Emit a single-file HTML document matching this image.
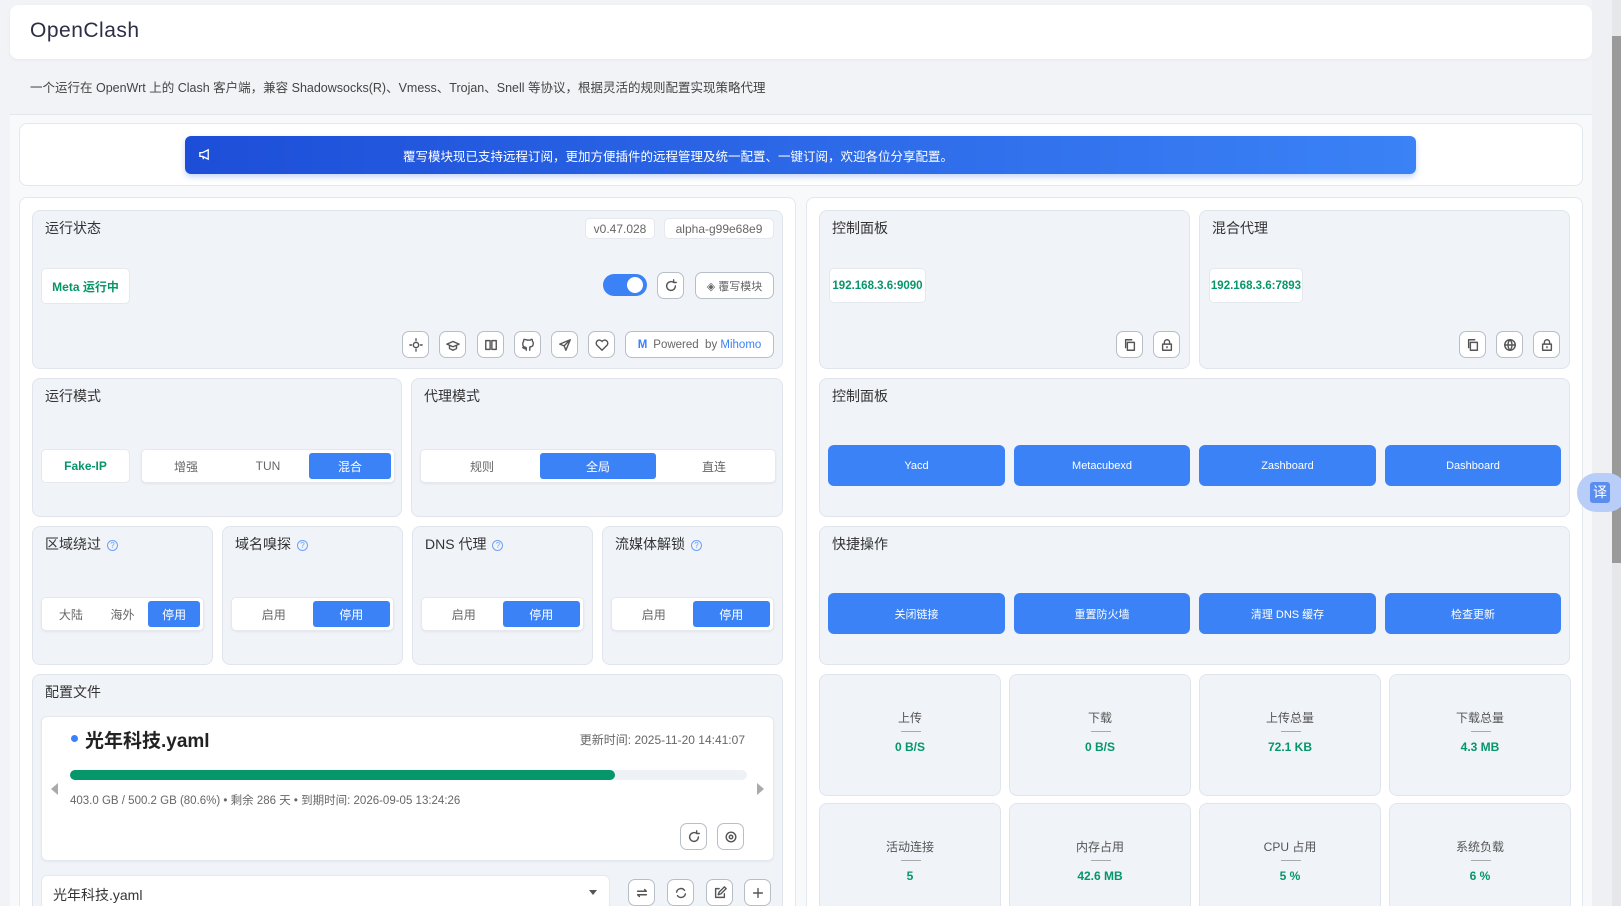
<!DOCTYPE html>
<html style="width:1621px;height:906px;overflow:hidden"><head><meta charset="utf-8">
<style>
*{box-sizing:border-box;margin:0;padding:0}
body{width:1621px;height:906px;overflow:hidden;background:#f2f3f6;font-family:"Liberation Sans","Noto Sans CJK SC",sans-serif;color:#333;position:relative}
.a{position:absolute}
.card{position:absolute;background:#f0f3f8;border:1px solid #e0e5ed;border-radius:8px}
.panel{position:absolute;background:#fff;border:1px solid #e3e7ee;border-radius:8px}
.t{position:absolute;left:12px;top:7px;font-size:14px;color:#333}
.wb{position:absolute;background:#fff;border:1px solid #e5e8ee;border-radius:5px;font-size:12px;display:flex;align-items:center;justify-content:center}
.g{color:#059669;font-weight:bold}
.ib{position:absolute;width:27px;height:27px;border:1px solid #b8bec8;border-radius:7px;background:#fff;display:flex;align-items:center;justify-content:center}
.ib svg{width:14px;height:14px;fill:none;stroke:#555;stroke-width:1.6;stroke-linecap:round;stroke-linejoin:round}
.seg{position:absolute;background:#fff;border:1px solid #e5e8ee;border-radius:5px;box-shadow:0 1px 2px rgba(0,0,0,.06);display:flex;padding:3px;font-size:12px;color:#666}
.seg div{flex:1;display:flex;align-items:center;justify-content:center;border-radius:3px}
.seg .on{background:#3b82f6;color:#fff}
.bb{position:absolute;background:#3b82f6;color:#fff;border-radius:6px;font-size:11px;display:flex;align-items:center;justify-content:center;height:41px}
.st{position:absolute;width:182px;height:122px;text-align:center;font-size:12px;color:#555}
.st .l{position:absolute;left:0;right:0;top:34px}
.st .d{position:absolute;left:81px;width:20px;top:56px;border-top:1px solid #aaa}
.st .v{position:absolute;left:0;right:0;top:65px;color:#059669;font-weight:bold;font-size:12px}
.q{display:inline-block;width:11px;height:11px;border:1px solid #6fa1f7;border-radius:50%;font-size:8px;color:#6fa1f7;text-align:center;line-height:10px;margin-left:6px;vertical-align:1px}
</style></head><body>

<div class="a" style="left:10px;top:5px;width:1582px;height:54px;background:#fff;border-radius:8px;box-shadow:0 1px 3px rgba(0,0,0,.05)"></div>
<div class="a" style="left:30px;top:19px;font-size:21px;color:#2b2f45;letter-spacing:.5px">OpenClash</div>
<div class="a" style="left:30px;top:77px;font-size:12.5px;color:#444">一个运行在 OpenWrt 上的 Clash 客户端，兼容 Shadowsocks(R)、Vmess、Trojan、Snell 等协议，根据灵活的规则配置实现策略代理</div>

<div class="a" style="left:10px;top:114px;width:1582px;height:792px;background:#f8f9fb;border-top:1px solid #e3e6eb"></div>
<div class="panel" style="left:19px;top:123px;width:1564px;height:63px"></div>
<div class="a" style="left:185px;top:136px;width:1231px;height:38px;border-radius:6px;background:linear-gradient(90deg,#1d4ed8,#3b82f6);box-shadow:0 3px 6px rgba(37,99,235,.25);color:#fff;font-size:12.5px;display:flex;align-items:center;padding-left:218px;white-space:nowrap">覆写模块现已支持远程订阅，更加方便插件的远程管理及统一配置、一键订阅，欢迎各位分享配置。</div>
<svg class="a" style="left:198px;top:148px" width="13" height="13" viewBox="0 0 14 14" fill="none" stroke="#fff" stroke-width="1.4"><path d="M2 5h3l6-3v10L5 9H2z M5 9l1 3"/></svg>

<div class="panel" style="left:19px;top:197px;width:777px;height:720px"></div>
<div class="panel" style="left:806px;top:197px;width:777px;height:720px"></div>

<!-- run status -->
<div class="card" style="left:32px;top:210px;width:751px;height:159px">
 <div class="t">运行状态</div>
 <div class="wb" style="left:552px;top:7px;width:70px;height:21px;color:#666">v0.47.028</div>
 <div class="wb" style="left:631px;top:7px;width:110px;height:21px;color:#666">alpha-g99e68e9</div>
 <div class="wb g" style="left:8px;top:57px;width:89px;height:36px">Meta 运行中</div>
 <div class="a" style="left:570px;top:63px;width:44px;height:22px;border-radius:11px;background:#3b82f6"><div class="a" style="left:24px;top:3px;width:16px;height:16px;border-radius:50%;background:#fff"></div></div>
 <div class="ib" style="left:624px;top:61px"><svg viewBox="0 0 16 16"><path d="M13 8a5 5 0 1 1-2-4M11 1v3h3"/></svg></div>
 <div class="a" style="left:662px;top:61px;width:79px;height:27px;border:1px solid #b8bec8;border-radius:7px;background:#fff;font-size:11px;color:#666;display:flex;align-items:center;justify-content:center">◈ 覆写模块</div>
 <div class="ib" style="left:369px;top:120px"><svg viewBox="0 0 16 16"><circle cx="8" cy="8" r="3"/><path d="M8 1v2M8 13v2M1 8h2M13 8h2"/></svg></div>
 <div class="ib" style="left:406px;top:120px"><svg viewBox="0 0 16 16"><path d="M1 7l7-3 7 3-7 3zM4 9v3l4 2 4-2V9"/></svg></div>
 <div class="ib" style="left:444px;top:120px"><svg viewBox="0 0 16 16"><path d="M2 3h5v10H2zM9 3h5v10H9z"/></svg></div>
 <div class="ib" style="left:481px;top:120px"><svg viewBox="0 0 16 16"><path d="M6 14v-2c-3 1-3-1-4-1M10 14v-2.5c0-1 .5-1.5 1-1.5 2 0 3-1 3-4 0-1-.5-2-1-2.5 0-1 0-2-.5-2-1 0-2 1-2 1a7 7 0 0 0-3 0S4.5 1.5 3.5 1.5C3 2 3 3 3 4c-.5.5-1 1.5-1 2.5 0 3 1 4 3 4 .5 0 1 .5 1 1.5"/></svg></div>
 <div class="ib" style="left:518px;top:120px"><svg viewBox="0 0 16 16"><path d="M14 2L2 7l5 2 2 5zM7 9l7-7"/></svg></div>
 <div class="ib" style="left:555px;top:120px"><svg viewBox="0 0 16 16"><path d="M8 14L2 8a3.5 3.5 0 0 1 6-4 3.5 3.5 0 0 1 6 4z"/></svg></div>
 <div class="a" style="left:592px;top:120px;width:149px;height:27px;border:1px solid #b8bec8;border-radius:7px;background:#fff;font-size:11.5px;color:#666;display:flex;align-items:center;justify-content:center"><b style="color:#3b82f6;margin-right:6px">M</b>Powered&nbsp; by&nbsp; <span style="color:#3b82f6">Mihomo</span></div>
</div>

<!-- run mode -->
<div class="card" style="left:32px;top:378px;width:370px;height:139px">
 <div class="t">运行模式</div>
 <div class="wb g" style="left:8px;top:70px;width:89px;height:34px">Fake-IP</div>
 <div class="seg" style="left:108px;top:70px;width:254px;height:34px"><div>增强</div><div>TUN</div><div class="on">混合</div></div>
</div>
<div class="card" style="left:411px;top:378px;width:372px;height:139px">
 <div class="t">代理模式</div>
 <div class="seg" style="left:8px;top:70px;width:356px;height:34px"><div>规则</div><div class="on">全局</div><div>直连</div></div>
</div>

<div class="card" style="left:32px;top:526px;width:181px;height:139px"><div class="t">区域绕过<span class="q">?</span></div>
 <div class="seg" style="left:8px;top:70px;width:163px;height:34px"><div>大陆</div><div>海外</div><div class="on">停用</div></div></div>
<div class="card" style="left:222px;top:526px;width:181px;height:139px"><div class="t">域名嗅探<span class="q">?</span></div>
 <div class="seg" style="left:8px;top:70px;width:163px;height:34px"><div>启用</div><div class="on">停用</div></div></div>
<div class="card" style="left:412px;top:526px;width:181px;height:139px"><div class="t">DNS 代理<span class="q">?</span></div>
 <div class="seg" style="left:8px;top:70px;width:163px;height:34px"><div>启用</div><div class="on">停用</div></div></div>
<div class="card" style="left:602px;top:526px;width:181px;height:139px"><div class="t">流媒体解锁<span class="q">?</span></div>
 <div class="seg" style="left:8px;top:70px;width:163px;height:34px"><div>启用</div><div class="on">停用</div></div></div>

<!-- config -->
<div class="card" style="left:32px;top:674px;width:751px;height:250px">
 <div class="t">配置文件</div>
 <div class="a" style="left:8px;top:41px;width:733px;height:145px;background:#fff;border:1px solid #e5e8ee;border-radius:6px;box-shadow:0 1px 2px rgba(0,0,0,.05)">
  <div class="a" style="left:29px;top:18px;width:7px;height:7px;border-radius:50%;background:#3b82f6"></div>
  <div class="a" style="left:43px;top:9px;font-size:19px;font-weight:bold;color:#222">光年科技.yaml</div>
  <div class="a" style="right:28px;top:14px;font-size:12px;color:#666">更新时间: 2025-11-20 14:41:07</div>
  <div class="a" style="left:28px;top:53px;width:677px;height:10px;border-radius:5px;background:#eef1f6"><div style="width:545px;height:10px;border-radius:5px;background:#059669"></div></div>
  <div class="a" style="left:9px;top:66px;width:0;height:0;border-top:6px solid transparent;border-bottom:6px solid transparent;border-right:7px solid #aaa"></div>
  <div class="a" style="right:9px;top:66px;width:0;height:0;border-top:6px solid transparent;border-bottom:6px solid transparent;border-left:7px solid #aaa"></div>
  <div class="a" style="left:28px;top:75px;font-size:11.5px;color:#666">403.0 GB / 500.2 GB (80.6%) • 剩余 286 天 • 到期时间: 2026-09-05 13:24:26</div>
  <div class="ib" style="left:638px;top:106px"><svg viewBox="0 0 16 16"><path d="M13 8a5 5 0 1 1-2-4M11 1v3h3"/></svg></div>
  <div class="ib" style="left:675px;top:106px"><svg viewBox="0 0 16 16"><circle cx="8" cy="8" r="2"/><circle cx="8" cy="8" r="5.5"/></svg></div>
 </div>
 <div class="a" style="left:8px;top:200px;width:569px;height:40px;background:#fff;border:1px solid #e5e8ee;border-radius:6px;font-size:14px;color:#333;padding:9px 11px">光年科技.yaml<span style="position:absolute;right:12px;top:14px;border-left:4px solid transparent;border-right:4px solid transparent;border-top:5px solid #555"></span></div>
 <div class="ib" style="left:595px;top:204px"><svg viewBox="0 0 16 16"><path d="M3 6h10l-2-2M13 10H3l2 2"/></svg></div>
 <div class="ib" style="left:634px;top:204px"><svg viewBox="0 0 16 16"><path d="M3 7a5 5 0 0 1 9-2M13 9a5 5 0 0 1-9 2"/></svg></div>
 <div class="ib" style="left:673px;top:204px"><svg viewBox="0 0 16 16"><path d="M7 3H3v10h10V9M6 10l1-3 6-6 2 2-6 6z"/></svg></div>
 <div class="ib" style="left:711px;top:204px"><svg viewBox="0 0 16 16"><path d="M8 3v10M3 8h10"/></svg></div>
</div>

<!-- right -->
<div class="card" style="left:819px;top:210px;width:371px;height:159px">
 <div class="t">控制面板</div>
 <div class="wb g" style="left:9px;top:57px;width:97px;height:35px;font-size:11.5px">192.168.3.6:9090</div>
 <div class="ib" style="left:296px;top:120px"><svg viewBox="0 0 16 16"><path d="M5 5h8v9H5zM3 11V2h7"/></svg></div>
 <div class="ib" style="left:333px;top:120px"><svg viewBox="0 0 16 16"><path d="M3 7h10v7H3zM5 7V5a3 3 0 0 1 6 0v2M8 10v1"/></svg></div>
</div>
<div class="card" style="left:1199px;top:210px;width:371px;height:159px">
 <div class="t">混合代理</div>
 <div class="wb g" style="left:9px;top:57px;width:94px;height:35px;font-size:11.5px">192.168.3.6:7893</div>
 <div class="ib" style="left:259px;top:120px"><svg viewBox="0 0 16 16"><path d="M5 5h8v9H5zM3 11V2h7"/></svg></div>
 <div class="ib" style="left:296px;top:120px"><svg viewBox="0 0 16 16"><circle cx="8" cy="8" r="6"/><path d="M2 8h12M8 2c-3 3-3 9 0 12M8 2c3 3 3 9 0 12"/></svg></div>
 <div class="ib" style="left:333px;top:120px"><svg viewBox="0 0 16 16"><path d="M3 7h10v7H3zM5 7V5a3 3 0 0 1 6 0v2M8 10v1"/></svg></div>
</div>
<div class="card" style="left:819px;top:378px;width:751px;height:139px"><div class="t">控制面板</div></div>
<div class="bb" style="left:828px;top:445px;width:177px">Yacd</div>
<div class="bb" style="left:1014px;top:445px;width:176px">Metacubexd</div>
<div class="bb" style="left:1199px;top:445px;width:177px">Zashboard</div>
<div class="bb" style="left:1385px;top:445px;width:176px">Dashboard</div>
<div class="card" style="left:819px;top:526px;width:751px;height:139px"><div class="t">快捷操作</div></div>
<div class="bb" style="left:828px;top:593px;width:177px">关闭链接</div>
<div class="bb" style="left:1014px;top:593px;width:176px">重置防火墙</div>
<div class="bb" style="left:1199px;top:593px;width:177px">清理 DNS 缓存</div>
<div class="bb" style="left:1385px;top:593px;width:176px">检查更新</div>

<div class="card st" style="left:819px;top:674px"><div class="l">上传</div><div class="d"></div><div class="v">0 B/S</div></div>
<div class="card st" style="left:1009px;top:674px"><div class="l">下载</div><div class="d"></div><div class="v">0 B/S</div></div>
<div class="card st" style="left:1199px;top:674px"><div class="l">上传总量</div><div class="d"></div><div class="v">72.1 KB</div></div>
<div class="card st" style="left:1389px;top:674px"><div class="l">下载总量</div><div class="d"></div><div class="v">4.3 MB</div></div>
<div class="card st" style="left:819px;top:803px"><div class="l">活动连接</div><div class="d"></div><div class="v">5</div></div>
<div class="card st" style="left:1009px;top:803px"><div class="l">内存占用</div><div class="d"></div><div class="v">42.6 MB</div></div>
<div class="card st" style="left:1199px;top:803px"><div class="l">CPU 占用</div><div class="d"></div><div class="v">5 %</div></div>
<div class="card st" style="left:1389px;top:803px"><div class="l">系统负载</div><div class="d"></div><div class="v">6 %</div></div>

<!-- scrollbar -->
<div class="a" style="left:1592px;top:0;width:20px;height:906px;background:#eef0f4"></div>
<div class="a" style="left:1612px;top:0;width:9px;height:906px;background:#e6e7ea"></div>
<div class="a" style="left:1612px;top:36px;width:9px;height:527px;background:#9a9a9a"></div>
<div class="a" style="left:1577px;top:473px;width:50px;height:39px;border-radius:20px;background:#b8cdf8"></div>
<div class="a" style="left:1590px;top:482px;width:20px;height:21px;border-radius:3px;background:#5b8def;color:#fff;font-size:14px;text-align:center;line-height:21px">译</div>
</body></html>
